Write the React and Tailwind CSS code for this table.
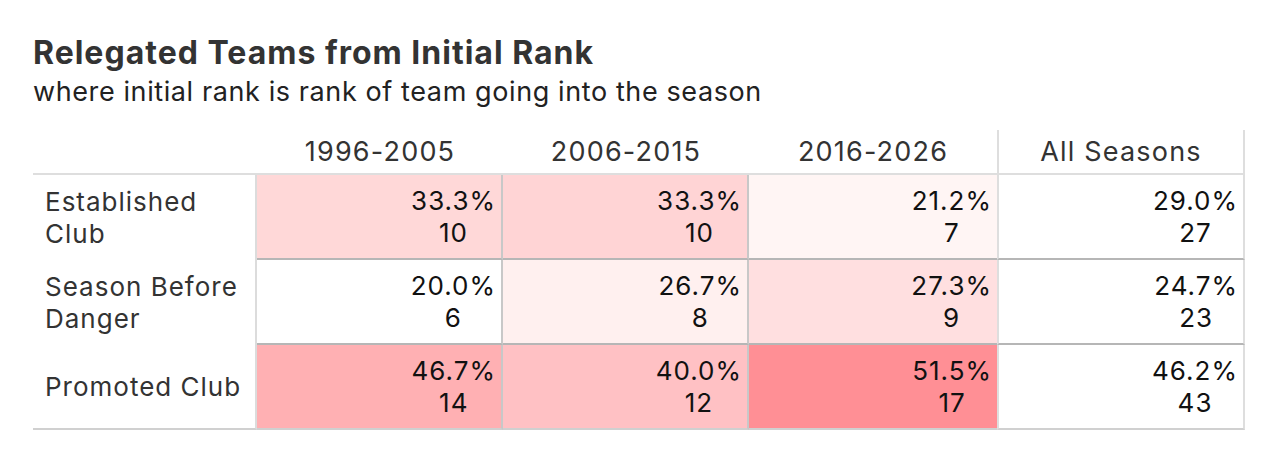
import React from 'react';

const columns = ['1996-2005', '2006-2015', '2016-2026'];

const rows = [
  {
    label: ['Established', 'Club'],
    cells: [
      { pct: '33.3%', n: 10, bg: 'bg-[#ffd8d8]' },
      { pct: '33.3%', n: 10, bg: 'bg-[#ffd4d5]' },
      { pct: '21.2%', n: 7, bg: 'bg-[#fff5f4]' },
    ],
    all: { pct: '29.0%', n: 27 },
  },
  {
    label: ['Season Before', 'Danger'],
    cells: [
      { pct: '20.0%', n: 6, bg: 'bg-white' },
      { pct: '26.7%', n: 8, bg: 'bg-[#fff0ef]' },
      { pct: '27.3%', n: 9, bg: 'bg-[#ffdfe0]' },
    ],
    all: { pct: '24.7%', n: 23 },
  },
  {
    label: ['Promoted Club'],
    cells: [
      { pct: '46.7%', n: 14, bg: 'bg-[#ffb0b3]' },
      { pct: '40.0%', n: 12, bg: 'bg-[#ffc1c4]' },
      { pct: '51.5%', n: 17, bg: 'bg-[#ff8f95]' },
    ],
    all: { pct: '46.2%', n: 43 },
  },
];

// value + count stacked, centred on each other, block pushed to the right
function Value({ pct, n }) {
  return (
    <div className="inline-block text-center">
      <div>{pct}</div>
      <div>{n}</div>
    </div>
  );
}

export default function App() {
  return (
    <div className="min-h-[465px] w-[1282px] bg-white pl-[33px] pt-[33px] font-['Inter','Liberation_Sans',sans-serif]">
      <h1 className="text-[32px] font-bold leading-[40px] tracking-[1px] text-[#333]">
        Relegated Teams from Initial Rank
      </h1>
      <p className="mt-[3px] text-[27px] leading-[32px] tracking-[0.6px] text-[#222]">
        where initial rank is rank of team going into the season
      </p>

      <div className="mt-[22px] grid w-[1212px] grid-cols-[224px_246px_246px_248px_248px] text-[26px] leading-[32px] tracking-[1px] text-[#111]">
        {/* header */}
        <div className="border-b-2 border-[#dedede]" />
        {columns.map((c) => (
          <div key={c} className="flex h-[45px] items-center justify-center border-b-2 border-[#dedede] text-[27px] tracking-[1.2px] text-[#333]">
            {c}
          </div>
        ))}
        <div className="flex h-[45px] items-center justify-center border-x-2 border-b-2 border-[#dedede] text-[27px] tracking-[1.2px] text-[#333]">
          All Seasons
        </div>

        {rows.map((r, i) => {
          const last = i === rows.length - 1;
          return (
            <React.Fragment key={i}>
              <div
                className={
                  'flex flex-col justify-center border-r-2 border-[#dcdcdc] pl-3 text-[#333] ' +
                  (last ? 'border-b-2 border-b-[#d0d0d0]' : '')
                }
              >
                {r.label.map((l) => (
                  <div key={l}>{l}</div>
                ))}
              </div>
              {r.cells.map((c, j) => (
                <div
                  key={j}
                  className={
                    'flex h-[85px] items-center justify-end border-b-2 pr-[5px] ' +
                    c.bg +
                    (last ? ' border-[#d0d0d0]' : ' border-[#b6b6b6]') +
                    (j < 2 ? ' border-r-2 border-r-[#c8c8c8]' : '')
                  }
                >
                  <Value {...c} />
                </div>
              ))}
              <div
                className={
                  'flex h-[85px] items-center justify-end border-x-2 border-b-2 border-x-[#dedede] pr-[5px] ' +
                  (last ? 'border-b-[#d0d0d0]' : 'border-b-[#b6b6b6]')
                }
              >
                <Value {...r.all} />
              </div>
            </React.Fragment>
          );
        })}
      </div>
    </div>
  );
}
